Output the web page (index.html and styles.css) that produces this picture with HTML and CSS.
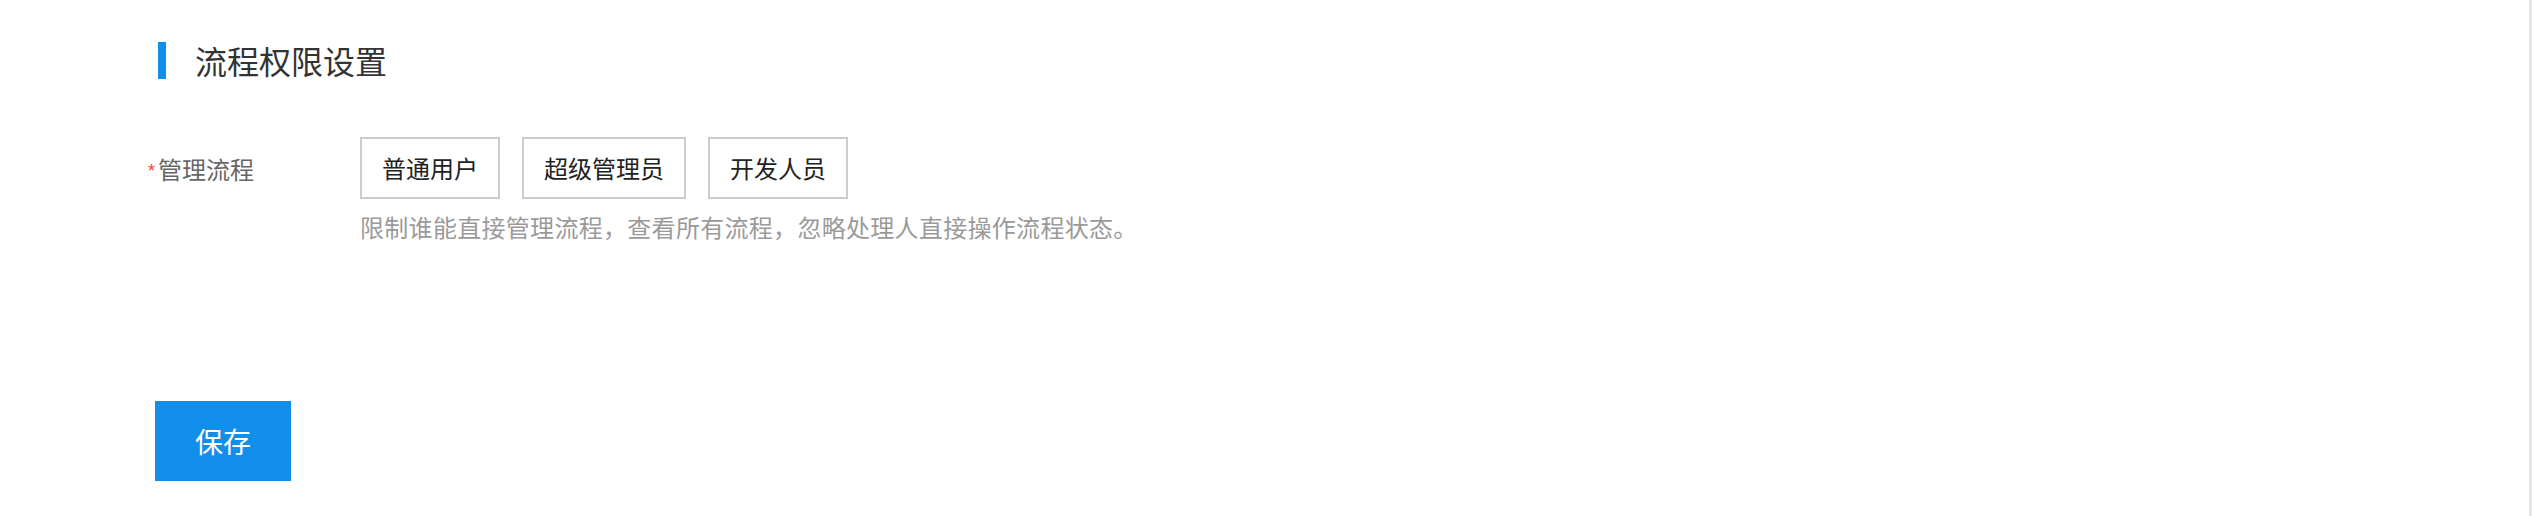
FILE: index.html
```html
<!DOCTYPE html>
<html lang="zh-CN">
<head>
<meta charset="utf-8">
<link rel="stylesheet" href="styles.css">
</head>
<body>
<div class="page">
  <div class="section-title">流程权限设置</div>
  <div class="form-row">
    <div class="form-label"><span class="required">*</span>管理流程</div>
    <div class="form-control">
      <div class="options">
        <div class="option">普通用户</div>
        <div class="option">超级管理员</div>
        <div class="option">开发人员</div>
      </div>
      <div class="hint">限制谁能直接管理流程，查看所有流程，忽略处理人直接操作流程状态。</div>
    </div>
  </div>
  <div class="actions">
    <button class="btn-primary">保存</button>
  </div>
</div>
</body>
</html>
```

FILE: styles.css
```css
html, body {
  margin: 0;
  padding: 0;
  background: #ffffff;
}

body {
  font-family: "Noto Sans CJK SC", "Noto Sans", sans-serif;
}

.page {
  box-sizing: border-box;
  height: 516px;
  padding-top: 42px;
  border-right: 3px solid #e6e6e6;
}

.section-title {
  margin-left: 158px;
  height: 37px;
  line-height: 37px;
  border-left: 8px solid #108ee9;
  padding-left: 29px;
  font-size: 32px;
  color: #333333;
}

.form-row {
  display: flex;
  margin-top: 58px;
  padding-left: 148px;
}

.form-label {
  width: 212px;
  height: 62px;
  display: flex;
  align-items: center;
  font-size: 24px;
  color: #666666;
}

.required {
  color: #f04134;
  font-size: 18px;
  margin-right: 3px;
  margin-top: 6px;
  font-family: "Liberation Sans", sans-serif;
}

.form-control {
  display: flex;
  flex-direction: column;
}

.options {
  display: flex;
  gap: 22px;
}

.option {
  box-sizing: border-box;
  height: 62px;
  line-height: 58px;
  padding: 0 20px;
  border: 2px solid #cccccc;
  font-size: 24px;
  color: #222222;
}

.hint {
  margin-top: 10px;
  font-size: 24px;
  line-height: 36px;
  color: #9a9a9a;
  letter-spacing: 0.3px;
}

.actions {
  margin-top: 156px;
  padding-left: 155px;
}

.btn-primary {
  width: 136px;
  height: 80px;
  border: none;
  background: #108ee9;
  color: #ffffff;
  font-family: "Noto Sans CJK SC", sans-serif;
  font-size: 28px;
  padding: 0;
}
```
